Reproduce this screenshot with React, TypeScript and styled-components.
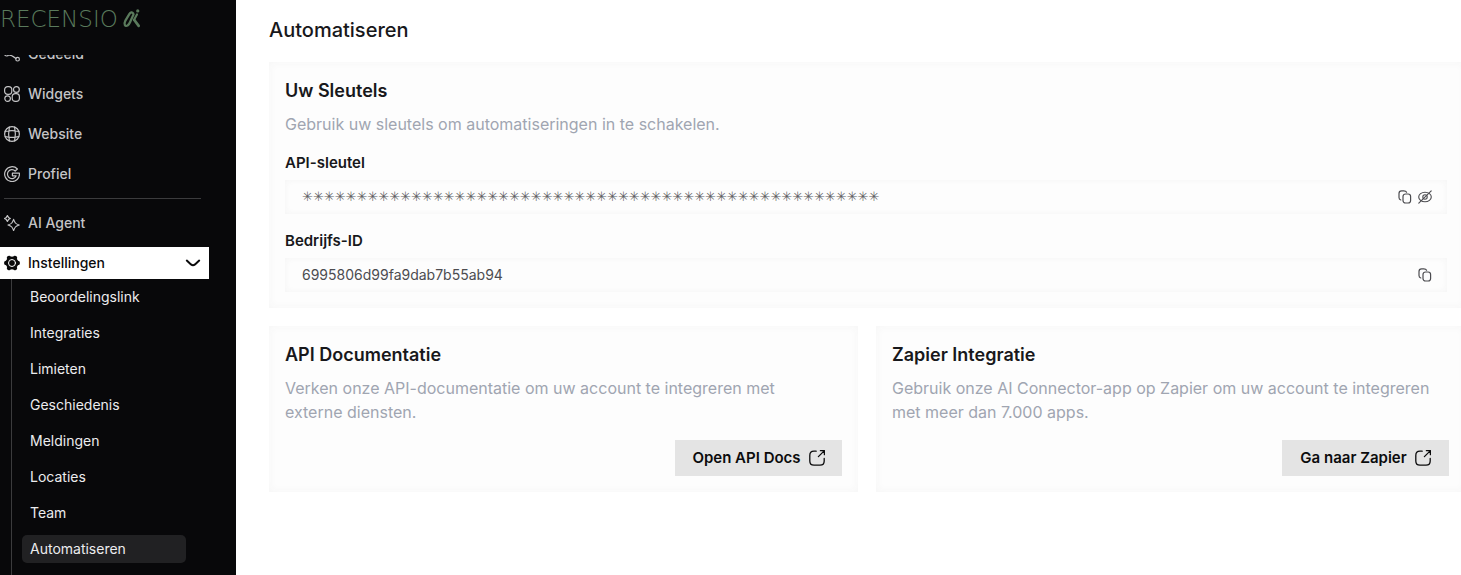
import React from "react";
import styled, { createGlobalStyle } from "styled-components";

const GlobalStyle = createGlobalStyle`
  *, *::before, *::after { box-sizing: border-box; }
  body {
    margin: 0;
    background: #ffffff;
    color: #18181b;
    font-family: Inter, "Liberation Sans", sans-serif;
    overflow: hidden;
  }
  button, input { font: inherit; color: inherit; }
  h1, h2, p, ul { margin: 0; padding: 0; }
  ul { list-style: none; }
`;

const Page = styled.div`
  display: flex;
  height: 100vh;
`;

const Sidebar = styled.aside`
  display: flex;
  flex-direction: column;
  flex: 0 0 236px;
  background: #08080a;
  overflow: hidden;
`;

const Brand = styled.a`
  display: flex;
  flex: 0 0 55px;
  align-items: flex-start;
  justify-content: flex-end;
  gap: 4px;
  width: 141px;
  padding-top: 8px;
  color: #5a7a5c;
  text-decoration: none;
`;

const BrandName = styled.span`
  font-family: "DejaVu Sans Light", "DejaVu Sans", sans-serif;
  font-size: 23px;
  font-weight: 200;
  line-height: 22px;
`;

const NavScroll = styled.nav`
  flex: 1;
  min-height: 0;
  overflow: hidden;
`;

const NavList = styled.ul`
  display: flex;
  flex-direction: column;
  gap: 8px;
  width: 209px;
  margin-top: -17px;
`;

const NavLink = styled.a`
  display: flex;
  align-items: center;
  gap: 8px;
  height: 32px;
  padding: 0 8px 0 4px;
  color: #c4c4c6;
  font-size: 14px;
  font-weight: 500;
  line-height: 20px;
  text-decoration: none;
`;

const NavToggle = styled.button`
  display: flex;
  align-items: center;
  gap: 8px;
  width: 100%;
  height: 32px;
  padding: 0 8px 0 4px;
  border: 0;
  background: #ffffff;
  color: #0a0a0b;
  font-size: 14px;
  font-weight: 500;
  line-height: 20px;
  text-align: left;
`;

const NavText = styled.span`
  flex: 1;
`;

const Divider = styled.li`
  height: 1px;
  margin: 0 8px 0 4px;
  background: #3b3b3d;
`;

const SubList = styled.ul`
  display: flex;
  flex-direction: column;
  gap: 8px;
  margin: 0 23px 0 11px;
  padding: 4px 0 40px 10px;
  border-left: 1px solid #3b3b3d;
`;

const SubLink = styled.a<{ $active?: boolean }>`
  display: block;
  padding: 4px 8px;
  border-radius: 5px;
  background: ${(p) => (p.$active ? "#212123" : "transparent")};
  color: #ececee;
  font-size: 14px;
  line-height: 20px;
  text-decoration: none;
`;

const Main = styled.main`
  flex: 1;
  min-width: 0;
  margin-right: -4px;
  padding: 16px 0 0 33px;
`;

const PageTitle = styled.h1`
  margin-bottom: 18px;
  font-size: 20px;
  font-weight: 500;
  line-height: 28px;
`;

const Cards = styled.div`
  display: grid;
  grid-template-columns: 1fr 1fr;
  gap: 18px;
`;

const Card = styled.section<{ $wide?: boolean }>`
  grid-column: ${(p) => (p.$wide ? "1 / -1" : "auto")};
  padding: 16px;
  background: #fdfdfd;
  box-shadow: inset 0 0 8px #f5f5f5;
`;

const CardTitle = styled.h2`
  margin-bottom: 8px;
  font-size: 18px;
  font-weight: 600;
  line-height: 26px;
`;

const Description = styled.p`
  padding-right: 10px;
  color: #a0a5b1;
  font-size: 16px;
  line-height: 24px;
`;

const Field = styled.div`
  margin-top: 17px;
`;

const Label = styled.label`
  display: block;
  margin-bottom: 7px;
  font-size: 15px;
  font-weight: 600;
  line-height: 20px;
`;

const InputBox = styled.div`
  display: flex;
  align-items: center;
  gap: 6px;
  height: 34px;
  margin-right: 2px;
  padding: 0 15px 0 17px;
  background: #fdfdfd;
  box-shadow: inset 0 0 6px #f4f4f4;
  color: #4c4c50;
`;

const Input = styled.input<{ $masked?: boolean }>`
  flex: 1;
  min-width: 0;
  padding: 0;
  border: 0;
  outline: 0;
  background: transparent;
  color: ${(p) => (p.$masked ? "#606063" : "#4c4c50")};
  font-family: ${(p) => (p.$masked ? '"DejaVu Sans", sans-serif' : "inherit")};
  font-size: ${(p) => (p.$masked ? "13px" : "14px")};
  line-height: 20px;
`;

const IconButton = styled.button`
  display: flex;
  padding: 0;
  border: 0;
  background: transparent;
`;

const Actions = styled.div`
  display: flex;
  justify-content: flex-end;
  margin-top: 16px;
`;

const ActionButton = styled.button`
  display: flex;
  align-items: center;
  justify-content: center;
  gap: 8px;
  min-width: 167px;
  height: 36px;
  padding: 0 16px;
  border: 0;
  background: #e4e4e4;
  color: #0c0c0d;
  font-size: 15px;
  font-weight: 600;
  line-height: 20px;
`;

type IconProps = { size?: number; stroke?: number; children: React.ReactNode };

const Icon = ({ size = 16, stroke = 1.2, children }: IconProps) => (
  <svg
    width={size}
    height={size}
    viewBox={`0 0 ${size} ${size}`}
    fill="none"
    stroke="currentColor"
    strokeWidth={stroke}
    strokeLinecap="round"
    strokeLinejoin="round"
    aria-hidden="true"
  >
    {children}
  </svg>
);

const BrandMark = () => (
  <svg width="20" height="22" viewBox="0 0 20 22" fill="none" stroke="currentColor" strokeLinecap="round" aria-hidden="true">
    <path d="M11.6 5.2C10.6 3.4 8.8 4 7.600 6L3.400 13C1.600 16.400 3.200 19.200 5.800 17.800C7.400 16.800 8 15.200 8.800 13.400L12 6.200" strokeWidth="2.400" />
    <path d="M12.800 12L17.400 18.200" strokeWidth="2.800" />
    <circle cx="16.400" cy="2.600" r="1.700" fill="currentColor" stroke="none" />
    <path d="M15.600 6.200L12.400 12" strokeWidth="2.200" />
  </svg>
);

const ShareIcon = () => (
  <Icon>
    <circle cx="2.6" cy="8" r="2" />
    <circle cx="13.6" cy="13.2" r="1.8" />
    <circle cx="13.4" cy="2.8" r="1.8" />
    <path d="M4.6 8.9C7.5 9 9.5 10.6 11.9 12.4M4.5 7.1l7.2-3.4" />
  </Icon>
);

const WidgetsIcon = () => (
  <Icon>
    <rect x="0.6" y="0.6" width="7.2" height="7.8" rx="3.1" />
    <circle cx="12.4" cy="3.5" r="2.9" />
    <circle cx="3.6" cy="12.6" r="2.8" />
    <rect x="8.2" y="7.6" width="7.2" height="7.8" rx="3.1" />
  </Icon>
);

const GlobeIcon = () => (
  <Icon>
    <circle cx="8" cy="8" r="7.4" />
    <path d="M5.4 1.2C4.4 5.6 4.4 10.4 5.4 14.8M10.6 1.2c1 4.4 1 9.2 0 13.6M1.2 5.4c4.4-1 9.2-1 13.6 0M1.2 10.6c4.4 1 9.2 1 13.6 0" />
  </Icon>
);

const GoogleIcon = () => (
  <Icon>
    <path d="M13.4 3A7.4 7.4 0 1 0 15.4 7.2H8.4v2.600h3.800A4.500 4.500 0 1 1 11.200 5Z" />
  </Icon>
);

const SparkleIcon = () => (
  <Icon>
    <path d="M9.6 4.4c.6 1.600 1 2.600 1.800 3.600s2 1.400 3.800 2c-1.800.6-3 1-3.800 2s-1.200 2-1.800 3.500c-.6-1.500-1-2.500-1.800-3.500s-2-1.400-3.800-2c1.800-.6 3-1 3.800-2s1.200-2 1.800-3.600Z" />
    <path d="M3.4.6L4.500 2.400 6.300 3.500 4.500 4.600 3.400 6.400 2.300 4.600.5 3.500 2.300 2.400Z" />
  </Icon>
);

const GearIcon = () => (
  <Icon>
    <g fill="currentColor" stroke="none">
      <circle cx="8" cy="8" r="6.4" />
      {[0, 60, 120, 180, 240, 300].map((angle) => (
        <circle key={angle} cx="13.8" cy="8" r="2.2" transform={`rotate(${angle} 8 8)`} />
      ))}
    </g>
    <circle cx="8" cy="8" r="3.500" stroke="#ffffff" strokeWidth="1" />
  </Icon>
);

const ChevronIcon = () => (
  <Icon stroke={2}>
    <path d="M1.8 5.6L6 9.400q2 1.500 4 0L14.200 5.600" />
  </Icon>
);

const CopyIcon = () => (
  <Icon size={14}>
    <rect x="5" y="4" width="7.6" height="9" rx="2.5" />
    <path d="M2.8 10C1.6 9.7 1 8.8 1 7.6V3.4C1 1.8 2 .8 3.6.8h2.2c1.4 0 2.4.6 2.8 1.5" />
  </Icon>
);

const EyeOffIcon = () => (
  <Icon size={14} stroke={1.1}>
    <ellipse cx="7" cy="7" rx="6.3" ry="4.8" />
    <circle cx="7" cy="7" r="2.2" />
    <path d="M.8 13.2L13.2.8" />
  </Icon>
);

const ExternalIcon = () => (
  <Icon stroke={1.3}>
    <path d="M7.2 1.2H5C2 1.2.8 2.4.8 5.4v5.6c0 3 1.2 4.2 4.2 4.2h6c3 0 4.2-1.2 4.2-4.2V8.4" />
    <path d="M9.4 6.6l6-6M11.4.7h4v4" />
  </Icon>
);

const topLinks = [
  { text: "Gedeeld", icon: <ShareIcon /> },
  { text: "Widgets", icon: <WidgetsIcon /> },
  { text: "Website", icon: <GlobeIcon /> },
  { text: "Profiel", icon: <GoogleIcon /> },
];

const settingsLinks = [
  "Beoordelingslink",
  "Integraties",
  "Limieten",
  "Geschiedenis",
  "Meldingen",
  "Locaties",
  "Team",
  "Automatiseren",
];

const integrations = [
  {
    title: "API Documentatie",
    text: "Verken onze API-documentatie om uw account te integreren met externe diensten.",
    action: "Open API Docs",
  },
  {
    title: "Zapier Integratie",
    text: "Gebruik onze AI Connector-app op Zapier om uw account te integreren met meer dan 7.000 apps.",
    action: "Ga naar Zapier",
  },
];

export default function App() {
  return (
    <>
      <GlobalStyle />
      <Page>
        <Sidebar>
          <Brand href="#">
            <BrandName>RECENSIO</BrandName>
            <BrandMark />
          </Brand>
          <NavScroll>
            <NavList>
              {topLinks.map((link) => (
                <li key={link.text}>
                  <NavLink href="#">
                    {link.icon}
                    <NavText>{link.text}</NavText>
                  </NavLink>
                </li>
              ))}
              <Divider role="separator" />
              <li>
                <NavLink href="#">
                  <SparkleIcon />
                  <NavText>AI Agent</NavText>
                </NavLink>
              </li>
              <li>
                <NavToggle type="button" aria-expanded="true">
                  <GearIcon />
                  <NavText>Instellingen</NavText>
                  <ChevronIcon />
                </NavToggle>
                <SubList>
                  {settingsLinks.map((text) => (
                    <li key={text}>
                      <SubLink href="#" $active={text === "Automatiseren"}>
                        {text}
                      </SubLink>
                    </li>
                  ))}
                </SubList>
              </li>
            </NavList>
          </NavScroll>
        </Sidebar>
        <Main>
          <PageTitle>Automatiseren</PageTitle>
          <Cards>
            <Card $wide>
              <CardTitle>Uw Sleutels</CardTitle>
              <Description>Gebruik uw sleutels om automatiseringen in te schakelen.</Description>
              <Field>
                <Label htmlFor="api-key">API-sleutel</Label>
                <InputBox>
                  <Input id="api-key" $masked readOnly value={"✳".repeat(53)} />
                  <IconButton type="button" aria-label="API-sleutel kopiëren">
                    <CopyIcon />
                  </IconButton>
                  <IconButton type="button" aria-label="API-sleutel tonen">
                    <EyeOffIcon />
                  </IconButton>
                </InputBox>
              </Field>
              <Field>
                <Label htmlFor="company-id">Bedrijfs-ID</Label>
                <InputBox>
                  <Input id="company-id" readOnly value="6995806d99fa9dab7b55ab94" />
                  <IconButton type="button" aria-label="Bedrijfs-ID kopiëren">
                    <CopyIcon />
                  </IconButton>
                </InputBox>
              </Field>
            </Card>
            {integrations.map((item) => (
              <Card key={item.title}>
                <CardTitle>{item.title}</CardTitle>
                <Description>{item.text}</Description>
                <Actions>
                  <ActionButton type="button">
                    {item.action}
                    <ExternalIcon />
                  </ActionButton>
                </Actions>
              </Card>
            ))}
          </Cards>
        </Main>
      </Page>
    </>
  );
}
